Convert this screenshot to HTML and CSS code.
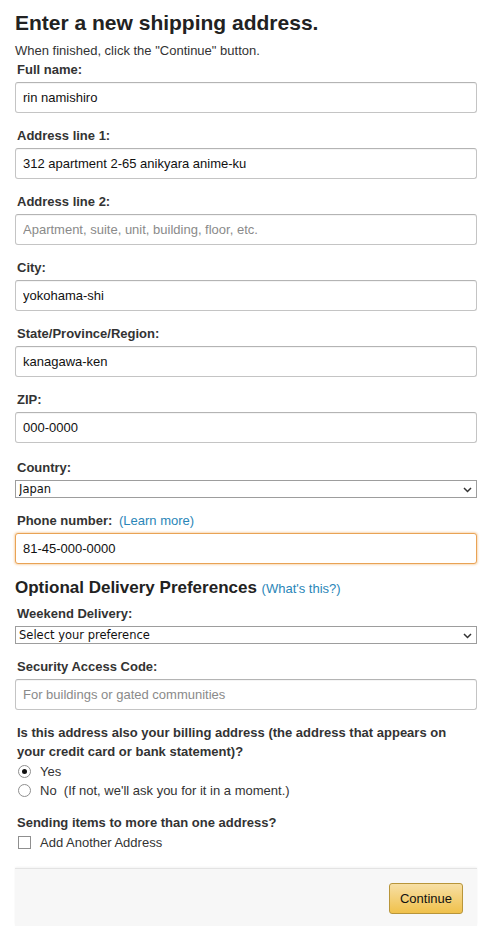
FILE: index.html
```html
<!DOCTYPE html>
<html lang="en">

<head>
    <meta charset="UTF-8">
    <meta name="viewport" content="width=device-width, initial-scale=1.0">
    <title>Enter a new shipping address</title>
    <link rel="stylesheet" href="styles.css">
</head>

<body>
    <div class="page">
        <h1 class="title">Enter a new shipping address.</h1>
        <p class="hint">When finished, click the "Continue" button.</p>

        <form id="address-form">
            <div class="field">
                <label for="full-name">Full name:</label>
                <input class="text-input" type="text" id="full-name" value="rin namishiro">
            </div>
            <div class="field">
                <label for="line1">Address line 1:</label>
                <input class="text-input" type="text" id="line1" value="312 apartment 2-65 anikyara anime-ku">
            </div>
            <div class="field">
                <label for="line2">Address line 2:</label>
                <input class="text-input" type="text" id="line2" placeholder="Apartment, suite, unit, building, floor, etc.">
            </div>
            <div class="field">
                <label for="city">City:</label>
                <input class="text-input" type="text" id="city" value="yokohama-shi">
            </div>
            <div class="field">
                <label for="state">State/Province/Region:</label>
                <input class="text-input" type="text" id="state" value="kanagawa-ken">
            </div>
            <div class="field">
                <label for="zip">ZIP:</label>
                <input class="text-input" type="text" id="zip" value="000-0000">
            </div>
            <div class="field select-field">
                <label for="country">Country:</label>
                <div class="select-box">
                    <select id="country">
                        <option>Japan</option>
                    </select>
                    <svg class="chevron" width="9" height="6" viewBox="0 0 9 6">
                        <path d="M1 1l3.5 3.5L8 1" fill="none" stroke="#333" stroke-width="1.5"/>
                    </svg>
                </div>
            </div>
            <div class="field">
                <label for="phone">Phone number: <a href="#" class="link">(Learn more)</a></label>
                <input class="text-input focused" type="text" id="phone" value="81-45-000-0000">
            </div>

            <h2 class="section-title">Optional Delivery Preferences <a href="#" class="link">(What's this?)</a></h2>

            <div class="field">
                <label for="weekend">Weekend Delivery:</label>
                <div class="select-box">
                    <select id="weekend">
                        <option>Select your preference</option>
                    </select>
                    <svg class="chevron" width="9" height="6" viewBox="0 0 9 6">
                        <path d="M1 1l3.5 3.5L8 1" fill="none" stroke="#333" stroke-width="1.5"/>
                    </svg>
                </div>
            </div>
            <div class="field">
                <label for="access-code">Security Access Code:</label>
                <input class="text-input" type="text" id="access-code" placeholder="For buildings or gated communities">
            </div>

            <div class="group">
                <p class="question">Is this address also your billing address (the address that appears on your credit card or bank statement)?</p>
                <label class="option"><input type="radio" name="billing" checked> Yes</label>
                <label class="option"><input type="radio" name="billing"> No &nbsp;(If not, we'll ask you for it in a moment.)</label>
            </div>

            <div class="group">
                <p class="question">Sending items to more than one address?</p>
                <label class="option"><input type="checkbox"> Add Another Address</label>
            </div>

            <div class="actions">
                <button type="submit" class="continue">Continue</button>
            </div>
        </form>
    </div>
</body>

</html>
```

FILE: styles.css
```css
body {
    font-family: "Liberation Sans", Arial, sans-serif;
    font-size: 13px;
    color: #111;
    margin: 0;
    padding: 0;
    background-color: #fff;
}

.page {
    width: 462px;
    margin-left: 15px;
    padding-top: 9px;
}

.title {
    font-size: 21px;
    line-height: 27px;
    font-weight: bold;
    color: #222;
    margin: 0 0 5px 0;
}

.hint {
    line-height: 19px;
    color: #333;
    margin: 0;
}

.field {
    margin-bottom: 13px;
}

.select-field {
    margin-top: 15px;
}

.field > label {
    display: block;
    padding-left: 2px;
    line-height: 19px;
    font-weight: bold;
    color: #333;
    margin-bottom: 3px;
}

.link {
    color: #2a86b8;
    font-weight: normal;
    text-decoration: none;
    margin-left: 3px;
}

.text-input {
    display: block;
    box-sizing: border-box;
    width: 100%;
    height: 31px;
    padding: 0 7px;
    border: 1px solid #c4c4c4;
    border-top-color: #b4b4b4;
    border-radius: 3px;
    box-shadow: 0 1px 0 rgba(0, 0, 0, 0.04) inset;
    font-family: inherit;
    font-size: 13px;
    color: #111;
    background: #fff;
}

.text-input::placeholder {
    color: #8a8a8a;
}

.text-input.focused {
    border-color: #e9a355;
    box-shadow: 0 0 2px 1px rgba(240, 165, 80, 0.4);
}

.select-box {
    position: relative;
}

.select-box select {
    display: block;
    width: 100%;
    height: 18px;
    box-sizing: border-box;
    appearance: none;
    border: 1px solid #9d9d9d;
    border-radius: 0;
    padding: 0 3px;
    background: #fff;
    font-family: "DejaVu Sans", sans-serif;
    font-size: 11.5px;
    color: #111;
}

.select-box .chevron {
    position: absolute;
    right: 5px;
    top: 7px;
}

.section-title {
    font-size: 17px;
    line-height: 22px;
    font-weight: bold;
    color: #222;
    margin: 0 0 4px 0;
}

.section-title .link {
    font-size: 13px;
    margin-left: 0;
}

.group {
    padding-left: 2px;
    margin-bottom: 13px;
}

.question {
    font-weight: bold;
    line-height: 19px;
    color: #333;
    margin: 0 0 1px 0;
}

.option {
    display: flex;
    align-items: center;
    gap: 9px;
    line-height: 19px;
    color: #333;
}

.option input {
    appearance: none;
    width: 13px;
    height: 13px;
    margin: 0 0 0 1px;
    border: 1px solid #8f8f8f;
    background: #fff;
}

.option input[type="radio"] {
    border-radius: 50%;
    display: grid;
    place-content: center;
}

.option input[type="radio"]:checked::before {
    content: "";
    width: 5px;
    height: 5px;
    border-radius: 50%;
    background: #111;
}

.actions {
    display: flex;
    justify-content: flex-end;
    margin-top: 16px;
    padding: 14px 14px 12px 0;
    background: #f7f7f7;
    border-top: 1px solid #e3e3e3;
    box-shadow: 0 -1px 2px rgba(0, 0, 0, 0.05);
}

.continue {
    height: 31px;
    width: 74px;
    border: 1px solid #b8953a;
    border-radius: 3px;
    background: linear-gradient(to bottom, #f7dfa5, #f0c14b);
    font-family: inherit;
    font-size: 13px;
    color: #111;
    cursor: pointer;
}
```
